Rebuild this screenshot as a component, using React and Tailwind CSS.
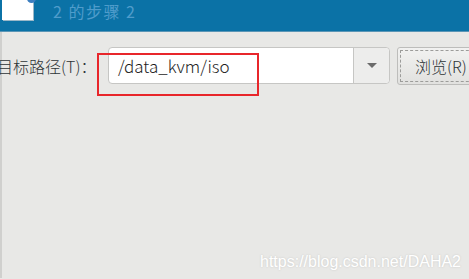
export default function App() {
  return (
    <div
      className="relative h-[279px] w-[469px] overflow-hidden bg-[#e8e8e6] text-[#2e3436]"
      style={{ fontFamily: '"Noto Sans CJK SC", "Noto Sans", sans-serif' }}
    >
      <header className="flex h-[32px] border-b border-[#5b96b6] bg-[#0b72a6] pl-[2px]">
        <div className="relative h-[20px] w-[31px] bg-white shadow-[1px_1px_0_#9bb8c8]">
          <span className="absolute -top-[6px] right-[-3px] h-[9px] w-[9px] rounded-full bg-[#3c7fc0]" />
        </div>
        <p className="ml-[20px] mt-[1px] text-[16px] leading-[20px] tracking-[1.5px] text-[#4f9ccb]">
          2 的步骤 2
        </p>
      </header>

      <div className="flex h-[246px] border-l-2 border-[#d0d0ce]">
        <div className="mt-[15px] flex h-[37px] items-center">
          <span className="-ml-[5px] w-[111px] whitespace-nowrap text-[16px] font-light text-[#2e3436]">
            目标路径(T)：
          </span>
          <div className="relative flex h-[37px] w-[282px] rounded-[4px] border border-[#c6c6c4] bg-white">
            <div className="flex flex-1 items-center pl-[9px] text-[17px] font-light text-[#1e1e1e]">/data_kvm/iso</div>
            <div className="flex w-[36px] items-center justify-center rounded-r-[4px] border-l border-[#c6c6c4] bg-[#ededec]">
              <svg width="10" height="6" viewBox="0 0 10 6">
                <path d="M0 0 L10 0 L5 5 Z" fill="#6b6b6b" />
              </svg>
            </div>
            <div className="absolute left-[-12px] top-[5px] h-[43px] w-[162px] border-2 border-[#e8262b]" />
          </div>
          <button className="ml-[7px] h-[38px] w-[90px] shrink-0 rounded-[3px] border border-[#bdbdbb] bg-gradient-to-b from-[#f2f2f1] to-[#e1e1df] p-[2px] text-[16px] font-light text-[#2e3436]">
            <span className="flex h-full items-center whitespace-nowrap border border-dashed border-[#9c9c9a] pl-[14px]">浏览(R)</span>
          </button>
        </div>
      </div>

      <p
        className="absolute left-[260px] top-[250px] text-[16px] text-white [text-shadow:0_0_2px_#c4c4c2]"
        style={{ fontFamily: '"Liberation Sans", sans-serif' }}
      >
        https://blog.csdn.net/DAHA2
      </p>
    </div>
  );
}
